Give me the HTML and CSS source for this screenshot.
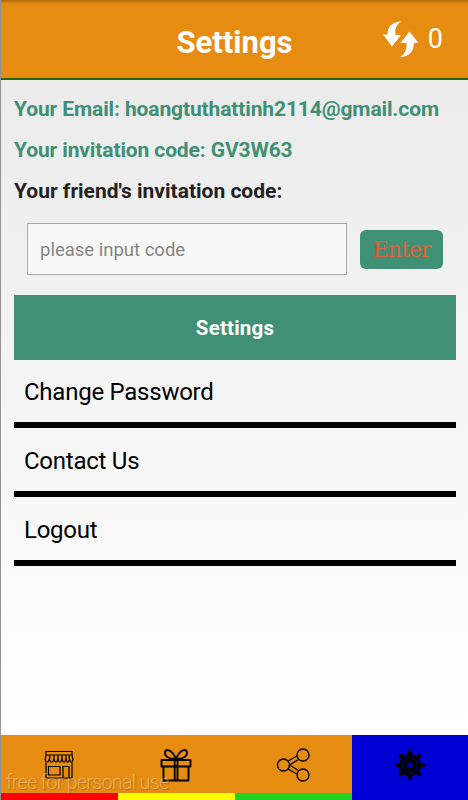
FILE: index.html
```html
<!DOCTYPE html>
<html lang="en">
<head>
    <meta charset="UTF-8">
    <meta name="viewport" content="width=device-width, user-scalable=no">
    <title>Settings</title>
    <link rel="stylesheet" href="styles.css">
</head>
<body>
<div class="box">
    <!--header-->
    <div class="head">
        <h1>Settings</h1>
        <div class="refresh">
            <svg width="36" height="36" viewBox="0 0 36 36" fill="#fff">
                <path d="M18.500 .5C9 .5 4.500 6 4.500 13.500H0L9 25.500L18 14H12.500C11.500 8 13.500 3 18.500 .5Z"/>
                <path d="M17 36C26 36 31 30 31 22H35.500L26.500 10.500L17.500 22H23.500C24 28 22 33 17 36Z"/>
            </svg>
            <span>0</span>
        </div>
    </div>
    <!--content-->
    <div class="content">
        <p class="green">Your Email: hoangtuthattinh2114@gmail.com</p>
        <p class="green">Your invitation code: GV3W63</p>
        <p>Your friend's invitation code:</p>
        <div class="form">
            <input type="text" placeholder="please input code">
            <button>Enter</button>
        </div>
        <h2>Settings</h2>
        <ul class="list">
            <li>Change Password</li>
            <li>Contact Us</li>
            <li>Logout</li>
        </ul>
    </div>
    <!--tab bar-->
    <ul class="tabs">
        <li>
            <svg width="30" height="30" viewBox="0 0 30 30" fill="none" stroke="#000" stroke-width="1.2">
                <path d="M2 1.500H28V5H2ZM2 5L1 10M28 5L29 10M6 5L5.500 10M10 5V10M14 5V10M18 5V10M22 5V10M25 5L25.500 10"/>
                <path d="M1 9.500Q3 15 5.200 9.500Q7.500 15 10 9.500Q12 15 14 9.500Q16 15 18 9.500Q20 15 22 9.500Q24 15 25.500 9.500Q27.500 15 29 9.500"/>
                <path d="M2 12.500V28H28V12.500M4.500 16.500H16V25H4.500ZM19 28V16.500H25V28"/>
            </svg>
        </li>
        <li class="yellow">
            <svg width="32" height="34" viewBox="0 0 32 34" fill="none" stroke="#000" stroke-width="1.9" stroke-linejoin="round">
                <path d="M1.500 12H30.500V18.500H1.500ZM3.500 18.500V32.500H28.500V18.500M14.700 12V32.500M17.500 12V32.500"/>
                <path d="M16 11C12 1 5 0 5 5C5 9 10 11 16 11ZM16 11C20 1 27 0 27 5C27 9 22 11 16 11Z"/>
            </svg>
        </li>
        <li class="lime">
            <svg width="34" height="34" viewBox="0 0 34 34" fill="none" stroke="#000" stroke-width="1.3">
                <circle cx="7.500" cy="17" r="6"/>
                <circle cx="27" cy="7" r="6"/>
                <circle cx="27" cy="27" r="6"/>
                <path d="M12 13L21 8M13.500 17L22.500 11.500M13.500 17L22.500 22.500M12 21L21 26"/>
            </svg>
        </li>
        <li class="current">
            <svg width="32" height="32" viewBox="0 0 32 32" fill="none" stroke="#000">
                <circle cx="16" cy="16" r="7.500" fill="#000" stroke-width="7"/>
                <circle cx="16" cy="16" r="7.500" stroke="#00006e" stroke-width="1.200"/>
                <circle cx="16" cy="16" r="2.800" fill="#0000b4" stroke="none"/>
                <path stroke-width="4" stroke-linecap="round" d="M16 3V6M16 26V29M3 16H6M26 16H29M6.800 6.800L9 9M23 23L25.200 25.200M6.800 25.200L9 23M23 9L25.200 6.800"/>
            </svg>
        </li>
    </ul>
    <span class="mark">free for personal use</span>
</div>
</body>
</html>
```

FILE: styles.css
```css
*{
    margin: 0;
    padding: 0;
    border: none;
    list-style: none;
    box-sizing: border-box;
}
body{
    font-family: Roboto, sans-serif;
    color: #000;
}

.box{
    position: relative;
    width: 468px;
    height: 800px;
    display: flex;
    flex-direction: column;
    border-left: 1px solid #929292;
    background: linear-gradient(#ebebeb 80px, #fff 735px);
    overflow: hidden;
}
.head{
    height: 80px;
    flex: none;
    display: grid;
    grid-template-columns: 1fr 116px 1fr;
    align-items: center;
    background: linear-gradient(#b36c0e, #e68c10 4px);
    border-bottom: 2px solid #286600;
}
.head h1{
    grid-column: 2;
    font-size: 31px;
    line-height: 40px;
    padding-top: 7px;
    text-align: center;
    color: #fff;
    white-space: nowrap;
}
.refresh{
    display: flex;
    align-items: center;
    justify-content: flex-end;
    gap: 9px;
    padding-right: 25px;
    color: #fff;
    font-size: 27px;
}

.content{
    flex: 1;
    padding: 9px 12px 0 13px;
}
.content p{
    height: 41px;
    line-height: 41px;
    font-size: 21px;
    font-weight: bold;
    color: #222;
    white-space: nowrap;
}
.content .green{
    color: #409076;
    letter-spacing: -.12px;
}
.form{
    display: flex;
    align-items: center;
    gap: 13px;
    height: 52px;
    margin: 11px 13px 20px;
}
.form input{
    width: 320px;
    height: 52px;
    padding: 2px 12px 0;
    border: 1px solid #aaa;
    background: #f8f8f8;
    font: 18.5px Roboto, sans-serif;
}
.form input::placeholder{
    color: #858585;
}
.form button{
    width: 83px;
    height: 39px;
    border-radius: 6px;
    background: #409076;
    color: #dc6039;
    font: 22px "DejaVu Serif", serif;
    letter-spacing: -1px;
}
.content h2{
    height: 65px;
    line-height: 66px;
    background: #409076;
    color: #fff;
    font-size: 20.5px;
    letter-spacing: .2px;
    text-align: center;
}
.list li{
    height: 69px;
    padding-left: 10px;
    line-height: 67px;
    border-bottom: 6px solid #000;
    font-size: 24px;
    letter-spacing: -.25px;
}
.list li:first-child{
    height: 68px;
    line-height: 65px;
}

.tabs{
    height: 65px;
    flex: none;
    display: flex;
}
.tabs li{
    width: 117px;
    flex: none;
    display: flex;
    justify-content: center;
    align-items: center;
    padding: 1px 2px 0 0;
    background: #e68c10;
    border-bottom: 7px solid #f00;
}
.tabs .yellow{
    border-color: #ff0;
}
.tabs .lime{
    border-color: #22d022;
}
.tabs .current{
    background: #0000d2;
    border-color: #0000d2;
}
.mark{
    position: absolute;
    left: 5px;
    bottom: 6px;
    font-size: 20px;
    line-height: 24px;
    font-weight: 300;
    letter-spacing: -.85px;
    color: rgba(255, 255, 255, .35);
    text-shadow: 1px 1px 1px rgba(100, 60, 0, .3);
}
```
